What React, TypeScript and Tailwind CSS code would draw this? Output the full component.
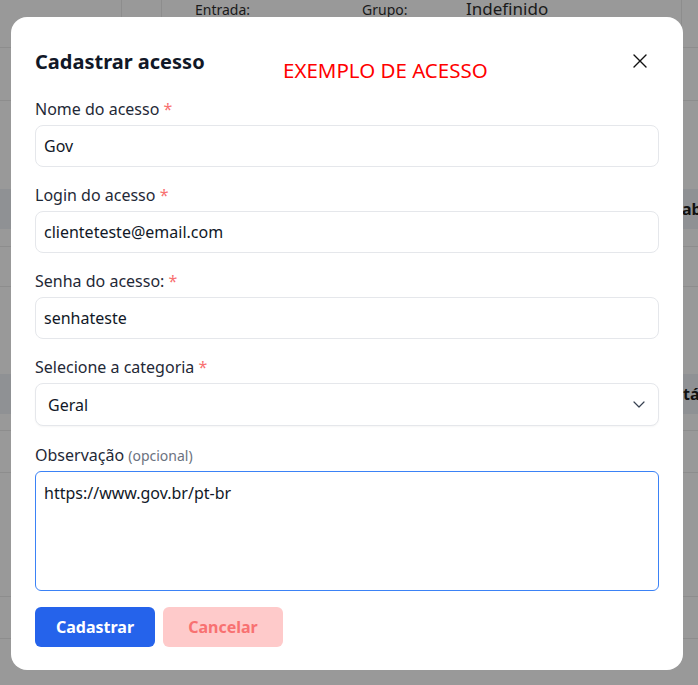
import React from "react";

const font = { fontFamily: '"Noto Sans", "Open Sans", sans-serif' };

function Field({ label, value }: { label: string; value: string }) {
  return (
    <div className="flex flex-col">
      <label className="text-[16px] leading-6 text-[#1f2937]">
        {label} <span className="text-[#f87171]">*</span>
      </label>
      <div className="mt-[4px] h-[42px] rounded-lg border border-[#e5e7eb] bg-white pl-[8px] flex items-center text-[16px] text-[#111827]">
        {value}
      </div>
    </div>
  );
}

export default function App() {
  return (
    <div className="relative w-[698px] h-[685px] overflow-hidden bg-[#999999]" style={font}>
      {/* background page (dimmed) */}
      <div className="flex flex-col">
        <div className="relative h-[48px] border-b border-[#8d8d8d] flex">
          <div className="w-[122px] border-r border-[#8d8d8d]" />
          <div className="w-[40px] border-r border-[#8d8d8d]" />
          <div className="w-[200px] pl-[33px] text-[14px] leading-5 text-[#1a1a1a]">Entrada:</div>
          <div className="w-[104px] text-[14px] leading-5 text-[#1a1a1a]">Grupo:</div>
          <div className="w-[176px] text-[17px] leading-[18px] text-[#1a1a1a] whitespace-nowrap">Indefinido</div>
          <div className="w-[40px] border-r border-[#8d8d8d]" />
          <div className="w-[16px]" />
        </div>
        <div className="h-[53px] border-b border-[#8d8d8d]" />
        <div className="h-[88px]" />
        <div className="h-[40px] bg-[#8f9194] flex items-center text-[16px] font-bold text-[#111] overflow-hidden">
          <span className="ml-[682px] whitespace-nowrap">abi</span>
        </div>
        <div className="h-[18px] border-b border-[#8d8d8d]" />
        <div className="h-[40px] border-b border-[#8d8d8d]" />
        <div className="h-[87px]" />
        <div className="h-[40px] bg-[#8f9194] flex items-center text-[16px] font-bold text-[#111] overflow-hidden">
          <span className="ml-[683px] whitespace-nowrap">tá</span>
        </div>
        <div className="h-[17px] border-b border-[#8d8d8d]" />
        <div className="h-[42px] border-b border-[#8d8d8d]" />
        <div className="h-[124px] border-b border-[#8d8d8d]" />
        <div className="h-[42px] border-b border-[#8d8d8d]" />
      </div>

      {/* modal */}
      <div className="absolute left-[11px] top-[17px] w-[672px] rounded-2xl bg-white px-6 pt-[31px] pb-[23px]">
        <div className="flex items-center justify-between h-[28px]">
          <h2 className="text-[20px] leading-7 font-bold text-[#111827]">Cadastrar acesso</h2>
          <button className="mr-[12px] mt-[-3px] text-[#111]">
            <svg width="14" height="14" viewBox="0 0 14 14" fill="none" stroke="currentColor" strokeWidth="1.4" strokeLinecap="round">
              <path d="M1 1 L13 13 M13 1 L1 13" />
            </svg>
          </button>
        </div>
        <div className="absolute left-[272px] top-[40px] text-[20.5px] leading-[26px] text-[#ff0000] whitespace-nowrap">EXEMPLO DE ACESSO</div>

        <div className="mt-[21px] flex flex-col gap-[16px]">
          <Field label="Nome do acesso" value="Gov" />
          <Field label="Login do acesso" value="clienteteste@email.com" />
          <Field label="Senha do acesso:" value="senhateste" />
          <div className="flex flex-col">
            <label className="text-[16px] leading-6 text-[#1f2937]">
              Selecione a categoria <span className="text-[#f87171]">*</span>
            </label>
            <div className="mt-[4px] h-[43px] rounded-lg border border-[#e5e7eb] bg-white pl-[12px] pr-[13px] flex items-center justify-between text-[16px] text-[#111827] shadow-[0_1px_2px_rgba(0,0,0,0.04)]">
              <span>Geral</span>
              <svg width="12" height="7" viewBox="0 0 12 7" fill="none" stroke="#374151" strokeWidth="1.2" strokeLinecap="round" strokeLinejoin="round">
                <path d="M1 1 L6 6 L11 1" />
              </svg>
            </div>
          </div>
          <div className="flex flex-col mt-[1px]">
            <label className="text-[16px] leading-6 text-[#1f2937]">
              Observação <span className="text-[14px] text-[#6b7280]">(opcional)</span>
            </label>
            <div className="mt-[3px] h-[120px] rounded-md border border-[#3b82f6] bg-white pl-[8px] pt-[9px] text-[16px] leading-6 text-[#111827]">
              https://www.gov.br/pt-br
            </div>
          </div>
        </div>

        <div className="mt-[16px] flex gap-2">
          <button className="h-[40px] w-[120px] rounded-md bg-[#2563eb] text-[16px] font-bold text-white">Cadastrar</button>
          <button className="h-[40px] w-[120px] rounded-md bg-[#fecaca] text-[16px] font-bold text-[#f87171]">Cancelar</button>
        </div>
      </div>
    </div>
  );
}
